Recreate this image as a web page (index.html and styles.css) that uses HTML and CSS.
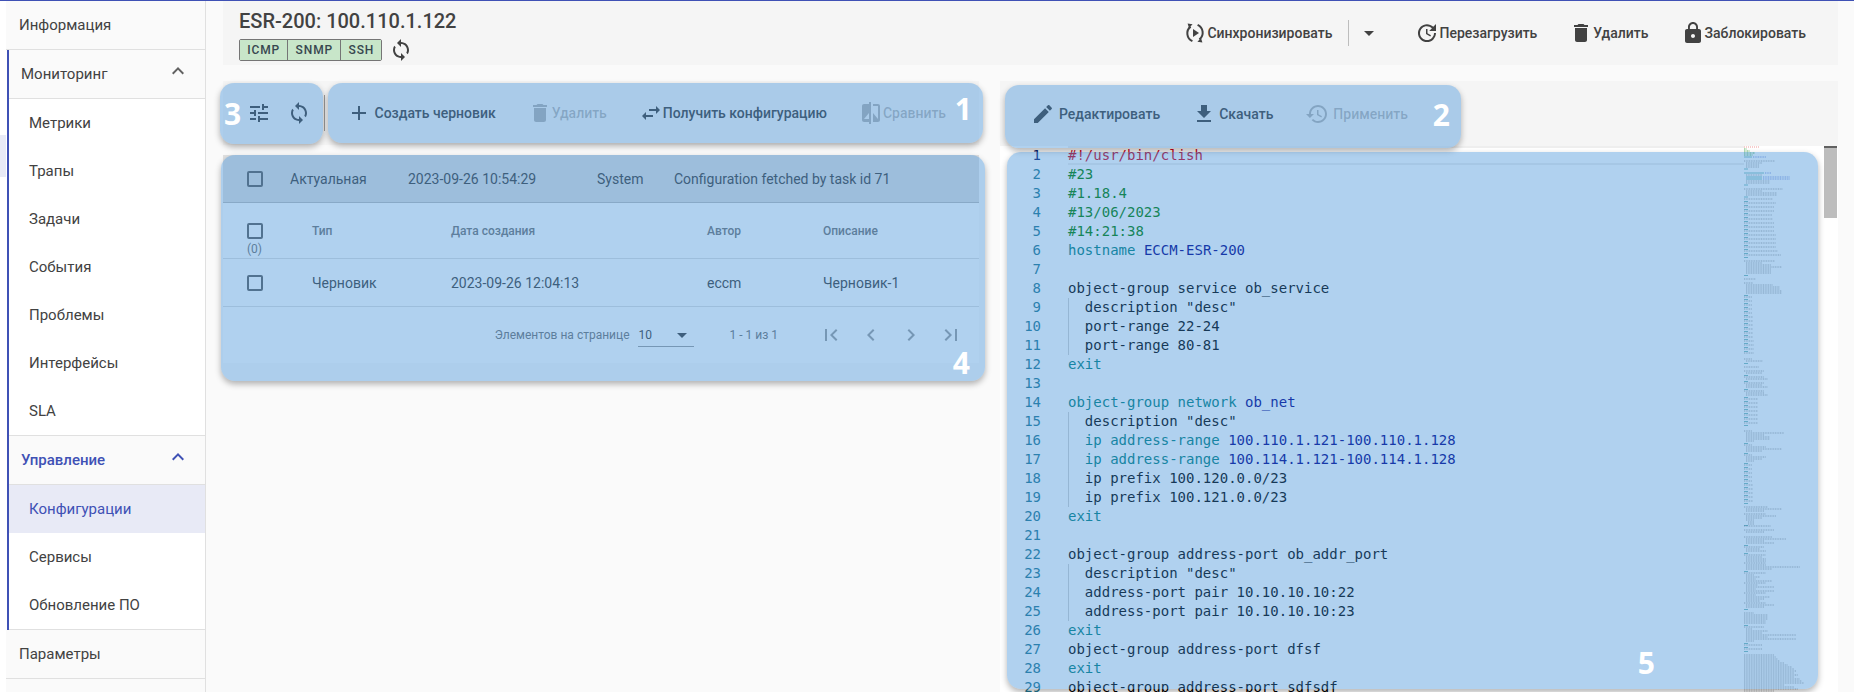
FILE: index.html
```html
<!DOCTYPE html>
<html>

<head>
  <meta charset="utf-8">
  <title>ESR-200</title>
  <link rel="stylesheet" href="styles.css">
</head>

<body>
  <div class="page">
    <!-- Side menu -->
    <div class="strip"><div class="strip-mark"></div></div>
    <div class="nav">
      <div class="nav-head nav-top">Информация</div>
      <div class="nav-group">
        <div class="nav-head">Мониторинг
          <svg class="chev" viewBox="0 0 24 24"><path d="M12 8l-6 6 1.41 1.41L12 10.83l4.59 4.58L18 14z"/></svg>
        </div>
        <div class="nav-item">Метрики</div>
        <div class="nav-item">Трапы</div>
        <div class="nav-item">Задачи</div>
        <div class="nav-item">События</div>
        <div class="nav-item">Проблемы</div>
        <div class="nav-item">Интерфейсы</div>
        <div class="nav-item">SLA</div>
      </div>
      <div class="nav-group">
        <div class="nav-head nav-head-active">Управление
          <svg class="chev" viewBox="0 0 24 24"><path d="M12 8l-6 6 1.41 1.41L12 10.83l4.59 4.58L18 14z"/></svg>
        </div>
        <div class="nav-item nav-item-active">Конфигурации</div>
        <div class="nav-item">Сервисы</div>
        <div class="nav-item">Обновление ПО</div>
      </div>
      <div class="nav-head nav-top">Параметры</div>
      <div class="nav-head nav-top"></div>
    </div>

    <div class="main">
      <!-- Device header -->
      <div class="device">
        <div class="device-info">
          <div class="device-title">ESR-200: 100.110.1.122</div>
          <div class="device-status">
            <div class="badges">
              <span class="badge">ICMP</span><span class="badge">SNMP</span><span class="badge">SSH</span>
            </div>
            <svg class="icon status-sync" viewBox="0 0 24 24"><path d="M12 4V1L8 5l4 4V6c3.31 0 6 2.69 6 6 0 1.01-.25 1.97-.7 2.8l1.46 1.46C19.54 15.03 20 13.57 20 12c0-4.42-3.58-8-8-8zm0 14c-3.31 0-6-2.69-6-6 0-1.01.25-1.97.7-2.8L5.24 7.74C4.46 8.97 4 10.43 4 12c0 4.42 3.58 8 8 8v3l4-4-4-4v3z"/></svg>
          </div>
        </div>
        <div class="device-actions">
          <div class="btn btn-split">
            <svg class="icon" viewBox="0 0 24 24">
              <path d="M10 8v8l6-4z"/>
              <path class="arc" d="M7.6 5.6A8.6 8.6 0 0 0 9.4 20.2"/>
              <path class="arc" d="M16.4 18.4A8.6 8.6 0 0 0 14.6 3.8"/>
              <path d="M4.6 2.6l5 .6-3.6 3.9zM19.4 21.4l-5-.6 3.6-3.9z"/>
            </svg>Синхронизировать
          </div>
          <div class="btn-arrow">
            <svg class="icon" viewBox="0 0 24 24"><path d="M7 10l5 5 5-5z"/></svg>
          </div>
          <div class="btn">
            <svg class="icon" viewBox="0 0 24 24"><path d="M21 10.12h-6.78l2.74-2.82c-2.73-2.7-7.15-2.8-9.88-.1-2.73 2.71-2.73 7.08 0 9.79s7.15 2.71 9.88 0C18.32 15.65 19 14.08 19 12.1h2c0 1.98-.88 4.55-2.64 6.29-3.51 3.48-9.21 3.48-12.72 0-3.5-3.47-3.53-9.11-.02-12.58s9.14-3.47 12.65 0L21 3v7.12zM12.5 8v4.25l3.5 2.08-.72 1.21L11 13V8h1.5z"/></svg>Перезагрузить
          </div>
          <div class="btn">
            <svg class="icon" viewBox="0 0 24 24"><path d="M6 19c0 1.1.9 2 2 2h8c1.1 0 2-.9 2-2V7H6v12zM19 4h-3.5l-1-1h-5l-1 1H5v2h14V4z"/></svg>Удалить
          </div>
          <div class="btn">
            <svg class="icon" viewBox="0 0 24 24"><path d="M18 8h-1V6c0-2.76-2.24-5-5-5S7 3.24 7 6v2H6c-1.1 0-2 .9-2 2v10c0 1.1.9 2 2 2h12c1.1 0 2-.9 2-2V10c0-1.1-.9-2-2-2zm-6 9c-1.1 0-2-.9-2-2s.9-2 2-2 2 .9 2 2-.9 2-2 2zm3.1-9H8.9V6c0-1.71 1.39-3.1 3.1-3.1 1.71 0 3.1 1.39 3.1 3.1v2z"/></svg>Заблокировать
          </div>
        </div>
      </div>

      <div class="panes">
        <!-- Left pane: list of configurations -->
        <div class="pane-left">
          <div class="toolbar">
            <div class="btn-round"><svg class="icon" viewBox="0 0 24 24"><path d="M3 17v2h6v-2H3zM3 5v2h10V5H3zm10 16v-2h8v-2h-8v-2h-2v6h2zM7 9v2H3v2h4v2h2V9H7zm14 4v-2H11v2h10zm-6-4h2V7h4V5h-4V3h-2v6z"/></svg></div>
            <div class="btn-round"><svg class="icon" viewBox="0 0 24 24"><path d="M12 4V1L8 5l4 4V6c3.31 0 6 2.69 6 6 0 1.01-.25 1.97-.7 2.8l1.46 1.46C19.54 15.03 20 13.57 20 12c0-4.42-3.58-8-8-8zm0 14c-3.31 0-6-2.69-6-6 0-1.01.25-1.97.7-2.8L5.24 7.74C4.46 8.97 4 10.43 4 12c0 4.42 3.58 8 8 8v3l4-4-4-4v3z"/></svg></div>
            <div class="toolbar-sep"></div>
            <div class="btn btn-first"><svg class="icon" viewBox="0 0 24 24"><path d="M19 13h-6v6h-2v-6H5v-2h6V5h2v6h6v2z"/></svg><span class="gap4">Создать черновик</span></div>
            <div class="btn btn-off"><svg class="icon" viewBox="0 0 24 24"><path d="M6 19c0 1.1.9 2 2 2h8c1.1 0 2-.9 2-2V7H6v12zM19 4h-3.5l-1-1h-5l-1 1H5v2h14V4z"/></svg>Удалить</div>
            <div class="btn"><svg class="icon" viewBox="0 0 24 24"><path d="M6.99 11L3 15l3.99 4v-3H14v-2H6.99v-3zM21 9l-3.99-4v3H10v2h7.01v3L21 9z"/></svg>Получить конфигурацию</div>
            <div class="btn btn-off"><svg class="icon" viewBox="0 0 24 24"><path d="M10 3H5c-1.1 0-2 .9-2 2v14c0 1.1.9 2 2 2h5v2h2V1h-2v2zm0 15H5l5-6v6zm9-15h-5v2h5v13l-5-6v9h5c1.1 0 2-.9 2-2V5c0-1.1-.9-2-2-2z"/></svg>Сравнить</div>
          </div>

          <div class="config-table">
            <div class="current-row">
              <span class="check"></span>
              <span class="cur-type">Актуальная</span>
              <span class="cur-date">2023-09-26 10:54:29</span>
              <span class="cur-author">System</span>
              <span>Configuration fetched by task id 71</span>
            </div>
            <div class="table-row table-head">
              <div class="check-cell"><span class="check"></span><span class="check-count">(0)</span></div>
              <span>Тип</span>
              <span>Дата создания</span>
              <span>Автор</span>
              <span>Описание</span>
            </div>
            <div class="table-row">
              <div class="check-cell"><span class="check"></span></div>
              <span>Черновик</span>
              <span>2023-09-26 12:04:13</span>
              <span>eccm</span>
              <span>Черновик-1</span>
            </div>
            <div class="paginator">
              <span>Элементов на странице</span>
              <div class="page-size"><span>10</span><svg class="icon" viewBox="0 0 24 24"><path d="M7 10l5 5 5-5z"/></svg></div>
              <span class="page-range">1 - 1 из 1</span>
              <div class="btn-round"><svg class="icon" viewBox="0 0 24 24"><path d="M18.41 16.59L13.82 12l4.59-4.59L17 6l-6 6 6 6zM6 6h2v12H6z"/></svg></div>
              <div class="btn-round"><svg class="icon" viewBox="0 0 24 24"><path d="M15.41 7.41L14 6l-6 6 6 6 1.41-1.41L10.83 12z"/></svg></div>
              <div class="btn-round"><svg class="icon" viewBox="0 0 24 24"><path d="M10 6L8.59 7.41 13.17 12l-4.58 4.59L10 18l6-6z"/></svg></div>
              <div class="btn-round"><svg class="icon" viewBox="0 0 24 24"><path d="M5.59 7.41L10.18 12l-4.59 4.59L7 18l6-6-6-6zM16 6h2v12h-2z"/></svg></div>
            </div>
          </div>
        </div>

        <!-- Right pane: editor -->
        <div class="pane-right">
          <div class="toolbar toolbar-right">
            <div class="btn"><svg class="icon" viewBox="0 0 24 24"><path d="M3 17.25V21h3.75L17.81 9.94l-3.75-3.75L3 17.25zM20.71 7.04c.39-.39.39-1.02 0-1.41l-2.34-2.34c-.39-.39-1.02-.39-1.41 0l-1.83 1.83 3.75 3.75 1.83-1.83z"/></svg><span class="gap4">Редактировать</span></div>
            <div class="btn"><svg class="icon" viewBox="0 0 24 24"><path d="M19 9h-4V3H9v6H5l7 7 7-7zM5 18v2h14v-2H5z"/></svg><span class="gap3">Скачать</span></div>
            <div class="btn btn-off"><svg class="icon" viewBox="0 0 24 24"><path d="M13 3c-4.97 0-9 4.03-9 9H1l3.89 3.89.07.14L9 12H6c0-3.87 3.13-7 7-7s7 3.13 7 7-3.13 7-7 7c-1.93 0-3.68-.79-4.94-2.06l-1.42 1.42C8.27 19.99 10.51 21 13 21c4.97 0 9-4.03 9-9s-4.03-9-9-9zm-1 5v5l4.28 2.54.72-1.21-3.5-2.08V8H12z"/></svg><span class="gap4">Применить</span></div>
          </div>

          <div class="editor">
            <div class="lines">
              <div class="line"><span class="ln ln-cur">1</span><span class="code code-cur sh">#!/usr/bin/clish</span></div>
              <div class="line"><span class="ln">2</span><span class="code cm">#23</span></div>
              <div class="line"><span class="ln">3</span><span class="code cm">#1.18.4</span></div>
              <div class="line"><span class="ln">4</span><span class="code cm">#13/06/2023</span></div>
              <div class="line"><span class="ln">5</span><span class="code cm">#14:21:38</span></div>
              <div class="line"><span class="ln">6</span><span class="code"><span class="kw">hostname</span> <span class="val">ECCM-ESR-200</span></span></div>
              <div class="line"><span class="ln">7</span><span class="code"></span></div>
              <div class="line"><span class="ln">8</span><span class="code">object-group service ob_service</span></div>
              <div class="line"><span class="ln">9</span><span class="code guide">  description "desc"</span></div>
              <div class="line"><span class="ln">10</span><span class="code guide">  port-range 22-24</span></div>
              <div class="line"><span class="ln">11</span><span class="code guide">  port-range 80-81</span></div>
              <div class="line"><span class="ln">12</span><span class="code kw">exit</span></div>
              <div class="line"><span class="ln">13</span><span class="code"></span></div>
              <div class="line"><span class="ln">14</span><span class="code"><span class="kw">object-group network</span> <span class="val">ob_net</span></span></div>
              <div class="line"><span class="ln">15</span><span class="code guide">  description "desc"</span></div>
              <div class="line"><span class="ln">16</span><span class="code guide">  <span class="kw">ip address-range</span> <span class="val">100.110.1.121-100.110.1.128</span></span></div>
              <div class="line"><span class="ln">17</span><span class="code guide">  <span class="kw">ip address-range</span> <span class="val">100.114.1.121-100.114.1.128</span></span></div>
              <div class="line"><span class="ln">18</span><span class="code guide">  ip prefix 100.120.0.0/23</span></div>
              <div class="line"><span class="ln">19</span><span class="code guide">  ip prefix 100.121.0.0/23</span></div>
              <div class="line"><span class="ln">20</span><span class="code kw">exit</span></div>
              <div class="line"><span class="ln">21</span><span class="code"></span></div>
              <div class="line"><span class="ln">22</span><span class="code">object-group address-port ob_addr_port</span></div>
              <div class="line"><span class="ln">23</span><span class="code guide">  description "desc"</span></div>
              <div class="line"><span class="ln">24</span><span class="code guide">  address-port pair 10.10.10.10:22</span></div>
              <div class="line"><span class="ln">25</span><span class="code guide">  address-port pair 10.10.10.10:23</span></div>
              <div class="line"><span class="ln">26</span><span class="code kw">exit</span></div>
              <div class="line"><span class="ln">27</span><span class="code">object-group address-port dfsf</span></div>
              <div class="line"><span class="ln">28</span><span class="code kw">exit</span></div>
              <div class="line"><span class="ln">29</span><span class="code">object-group address-port sdfsdf</span></div>
            </div>

            <svg class="minimap" viewBox="0 0 80 546" width="80" height="546">
              <g class="mm-sh"><path d="M0 1h16"/></g>
              <g class="mm-cm"><path d="M0 3h3M0 5h6M0 7h11M0 9h9"/></g>
              <g class="mm-kw">
                <path d="M0 11h8M0 23h4M0 27h20M2 31h16M2 33h16M0 39h4M0 51h4"/>
                <path class="mm-exits" d="M2 55V113M2 129v1M2 149V209M2 217v1M2 229v1M2 235v1M2 243v1M2 251V283M2 297v1M2 307v1M2 317V359M2 379v1M2 399v1M2 407v1M2 425v1M2 463v1M2 479v1M2 497v1M2 501v1M2 505v1"/>
              </g>
              <g class="mm-val"><path d="M9 11h13M21 27h6M19 31h27M19 33h27"/></g>
              <path class="mm-txt" d="M0 15h31M2 17h16M2 19h13M2 21h13M2 29h16M2 35h24M2 37h24M0 43h39M2 45h16M2 47h31M2 49h31M0 53h29M0 57h32M0 61h30M0 65h30M0 69h28M0 73h29M0 77h30M0 81h30M0 85h30M0 89h32M0 93h32M0 97h32M0 101h32M0 105h34M0 109h37M0 115h31M2 117h16M2 119h25M2 121h36M2 123h25M2 125h25M2 127h25M0 133h12M0 137h9M2 139h27M2 141h34M2 143h34M2 145h36M2 147h36M0 151h8M0 155h8M0 159h8M0 163h8M0 167h8M0 171h9M0 175h9M0 179h9M0 183h9M0 187h9M0 191h9M0 195h10M0 199h10M0 203h10M0 207h10M0 213h8M2 215h17M0 221h15M0 225h20M2 227h16M0 231h20M2 233h22M0 237h20M2 239h16M2 241h22M0 245h20M2 247h18M2 249h22M0 253h14M0 257h14M0 261h14M0 265h14M0 269h14M0 273h14M0 277h14M0 285h8M2 287h38M2 289h18M2 291h24M2 293h24M2 295h8M0 299h8M2 301h20M2 303h36M2 305h16M0 309h8M2 311h20M2 313h16M2 315h8M0 319h8M0 323h8M0 327h8M0 331h8M0 335h8M0 339h9M0 343h9M0 347h9M0 351h9M0 355h9M0 361h24M2 363h36M2 365h18M0 368h22M2 370h30M2 372h16M2 374h8M4 376h6M4 378h6M0 380h27M0 384h30M2 386h18M0 391h28M2 393h40M2 395h18M2 397h28M0 401h20M2 403h14M2 405h20M0 409h22M2 411h16M2 413h20M2 415h20M0 417h22M2 419h20M2 421h54M2 423h26M0 427h22M2 429h8M2 431h14M2 433h10M2 435h26M0 437h22M2 439h12M2 441h28M2 443h10M2 445h28M0 447h22M2 449h10M2 451h24M2 453h18M2 455h14M0 457h22M2 459h28M2 461h18M0 467h10M0 469h24M0 471h24M0 473h24M0 475h22M0 477h22M0 481h20M2 483h6M2 485h22M2 487h16M2 489h50M2 491h22M2 493h50M2 495h8M0 499h18M0 503h18M0 509h30M0 511h32M0 513h34M0 515h36M0 517h40M0 519h44M0 521h48M0 523h50M0 525h52M0 527h50M0 529h54M0 531h50M0 533h56M0 535h58M0 537h60M0 539h40M0 541h50M0 543h54M0 545h30"/>
            </svg>

            <div class="scrollbar"><div class="scroll-thumb"></div></div>
          </div>
        </div>
      </div>
    </div>

    <!-- Numbered blue marks laid over the screenshot -->
    <div class="mark mark-3"><span class="mark-num">3</span></div>
    <div class="mark mark-1"><span class="mark-num">1</span></div>
    <div class="mark mark-2"><span class="mark-num">2</span></div>
    <div class="mark mark-4"><span class="mark-num">4</span></div>
    <div class="mark mark-5"><span class="mark-num">5</span></div>
  </div>
</body>
</html>
```

FILE: styles.css
```css
/* Page frame */
body {
  margin: 0;
  font-family: Roboto, "Liberation Sans", sans-serif;
  font-size: 14px;
  color: #212121;
  background-color: #fafafa;
}

.page {
  position: relative;
  display: flex;
  height: 691px;
  overflow: hidden;
  border-top: 1px solid #3f51b5;
}

/* Side menu */
.strip {
  width: 6px;
  flex: none;
  background-color: #fff;
}

.strip-mark {
  height: 42px;
  margin-top: 134px;
  background-color: #e8eaf6;
}

.nav {
  width: 200px;
  flex: none;
  border-right: 1px solid #e0e0e0;
  box-sizing: border-box;
  background-color: #fff;
  font-size: 15px;
  color: #424242;
}

.nav-head {
  position: relative;
  display: flex;
  align-items: center;
  height: 48px;
  padding-left: 12px;
  border-bottom: 1px solid #e0e0e0;
  background-color: #fafafa;
}

.nav-top {
  padding-left: 13px;
}

.nav-group {
  border-left: 2px solid #3f51b5;
  margin-left: 1px;
}

.nav-head-active {
  color: #3f51b5;
  font-weight: 500;
}

.chev {
  position: absolute;
  right: 15px;
  top: 9px;
  width: 24px;
  height: 24px;
  fill: #616161;
}

.nav-head-active .chev {
  fill: #3f51b5;
}

.nav-item {
  display: flex;
  align-items: center;
  height: 48px;
  padding-left: 20px;
}

.nav-item:last-child {
  border-bottom: 1px solid #e0e0e0;
}

.nav-item-active {
  color: #3f51b5;
  background-color: #e8eaf6;
}

/* Main area */
.main {
  flex: 1;
  min-width: 0;
  padding: 0 16px 0 17px;
}

.icon {
  width: 24px;
  height: 24px;
  flex: none;
  fill: currentColor;
}

.arc {
  fill: none;
  stroke: currentColor;
  stroke-width: 2;
}

.btn {
  display: flex;
  align-items: center;
  padding: 0 16px;
  font-weight: 500;
  color: #424242;
  white-space: nowrap;
}

.btn-off {
  color: rgba(0, 0, 0, 0.26);
}

.btn-round {
  display: flex;
  align-items: center;
  justify-content: center;
  width: 40px;
  height: 40px;
  flex: none;
}

.gap4 {
  margin-left: 4px;
}

.gap3 {
  margin-left: 3px;
}

/* Device header */
.device {
  display: flex;
  justify-content: space-between;
  align-items: center;
  height: 64px;
  background-color: #f5f5f5;
}

.device-info {
  padding-left: 16px;
}

.device-title {
  font-size: 20px;
  font-weight: 500;
  line-height: 26px;
  margin-top: 7px;
  color: #424242;
}

.device-status {
  display: flex;
  align-items: center;
  margin-top: 4px;
  margin-bottom: 4px;
}

.badges {
  display: flex;
  border: 1px solid #757575;
  border-radius: 2px;
}

.badge {
  padding: 0 7.2px;
  height: 20px;
  line-height: 20px;
  font-size: 12px;
  font-weight: 500;
  letter-spacing: 0.9px;
  background-color: #c8e6c9;
  color: #37474f;
  border-left: 1px solid #757575;
}

.badge:first-child {
  border-left: none;
}

.status-sync {
  margin-left: 7px;
  color: #424242;
}

.device-actions {
  display: flex;
  align-items: center;
  height: 26px;
  padding-right: 16px;
}

.btn-split {
  height: 26px;
  border-right: 1px solid #bdbdbd;
}

.btn-arrow {
  display: flex;
  padding: 0 18px 0 8px;
  color: #424242;
}

/* Panes */
.panes {
  display: flex;
  justify-content: space-between;
  margin-top: 16px;
}

.pane-left {
  width: 756px;
  flex: none;
}

.pane-right {
  width: 838px;
  flex: none;
}

.toolbar {
  display: flex;
  align-items: center;
  height: 64px;
  padding-left: 15.5px;
  color: #424242;
  background-color: #f5f5f5;
}

.toolbar-right {
  height: 65px;
  padding-left: 15px;
}

.toolbar-sep {
  width: 1px;
  height: 36px;
  margin: 0 6px 0 5px;
  background-color: #9e9e9e;
}

/* Configurations table */
.config-table {
  margin-top: 10px;
  background-color: #fff;
}

.current-row {
  display: flex;
  align-items: center;
  height: 47px;
  padding-left: 24px;
  background-color: #e0e0e0;
  border-bottom: 1px solid #bdbdbd;
  color: #424242;
}

.cur-type {
  margin-left: 27px;
  width: 118px;
}

.cur-date {
  width: 189px;
}

.cur-author {
  width: 77px;
}

.check {
  display: block;
  width: 12px;
  height: 12px;
  border: 2px solid #616161;
  border-radius: 2px;
  flex: none;
}

.table-row {
  display: grid;
  grid-template-columns: 65px 139px 256px 116px 1fr;
  align-items: center;
  height: 47px;
  padding-left: 24px;
  border-bottom: 1px solid #e0e0e0;
  color: #424242;
}

.table-head {
  height: 55px;
  font-size: 12px;
  font-weight: 500;
  color: #757575;
}

.check-cell {
  position: relative;
}

.check-count {
  position: absolute;
  left: 0;
  top: 19px;
  font-size: 12px;
  font-weight: 400;
  color: #757575;
}

.paginator {
  display: flex;
  align-items: center;
  justify-content: flex-end;
  height: 56px;
  padding-right: 8px;
  font-size: 12px;
  color: #757575;
}

.paginator .btn-round {
  color: #9e9e9e;
}

.page-size {
  display: flex;
  align-items: center;
  justify-content: space-between;
  box-sizing: border-box;
  width: 56px;
  height: 24px;
  margin-left: 8px;
  padding-left: 1px;
  border-bottom: 1px solid #9e9e9e;
  color: #424242;
}

.page-range {
  margin: 0 33px 0 36px;
}

/* Editor */
.editor {
  display: flex;
  height: 546px;
  overflow: hidden;
  background-color: #fff;
  font-family: "DejaVu Sans Mono", monospace;
  font-size: 14px;
  color: #000;
}

.lines {
  width: 744px;
  flex: none;
}

.line {
  display: flex;
  height: 19px;
  line-height: 19px;
  white-space: pre;
}

.ln {
  width: 41px;
  flex: none;
  margin-right: 27px;
  text-align: right;
  color: #237893;
}

.ln-cur {
  color: #0b216f;
}

.code {
  flex: 1;
}

.code-cur {
  box-shadow: inset 0 2px 0 #eee, inset 0 -2px 0 #eee;
}

.guide {
  box-shadow: inset 1px 0 0 #d3d3d3;
}

.sh {
  color: #d00020;
}

.cm {
  color: #008000;
}

.kw {
  color: #008080;
}

.val {
  color: #00008b;
}

/* Minimap drawn as strokes, one line of code = 2px */
.minimap {
  flex: none;
  display: block;
  fill: none;
  stroke-width: 1;
}

.mm-txt {
  stroke: #333;
  stroke-opacity: 0.4;
  stroke-dasharray: 1 0.7;
}

.mm-sh {
  stroke: #ef9a9a;
  stroke-dasharray: 1 1;
}

.mm-cm {
  stroke: #66bb6a;
  stroke-dasharray: 1 0.5;
}

.mm-kw {
  stroke: #008080;
  stroke-opacity: 0.5;
}

.mm-exits {
  stroke-width: 4;
  stroke-dasharray: 1 3;
}

.mm-val {
  stroke: #1a3fc4;
  stroke-opacity: 0.5;
  stroke-dasharray: 1 0.7;
}

.scrollbar {
  width: 14px;
  flex: none;
}

.scroll-thumb {
  width: 13px;
  height: 72px;
  background-color: #bdbdbd;
  border-top: 2px solid #616161;
  box-sizing: border-box;
}

/* Numbered blue marks */
.mark {
  position: absolute;
  display: flex;
  align-items: center;
  background-color: rgba(57, 140, 215, 0.4);
  border-radius: 14px;
  box-shadow: 0 3px 6px rgba(0, 0, 0, 0.3);
}

.mark-num {
  font-family: "Open Sans", sans-serif;
  font-size: 30px;
  font-weight: 700;
  line-height: 40px;
  color: #fff;
}

.mark-3 {
  left: 220px;
  top: 82px;
  width: 103px;
  height: 61px;
  padding-left: 4px;
  box-sizing: border-box;
}

.mark-1 {
  left: 328px;
  top: 82px;
  width: 655px;
  height: 60px;
  justify-content: flex-end;
  align-items: flex-start;
  padding: 6px 11px 0 0;
  box-sizing: border-box;
}

.mark-2 {
  left: 1005px;
  top: 84px;
  width: 456px;
  height: 63px;
  justify-content: flex-end;
  padding: 0 11px 4px 0;
  box-sizing: border-box;
}

.mark-4 {
  left: 221px;
  top: 154px;
  width: 764px;
  height: 226px;
  justify-content: flex-end;
  align-items: flex-end;
  padding-right: 15px;
  box-sizing: border-box;
}

.mark-4 .mark-num {
  margin-bottom: -2px;
}

.mark-5 {
  left: 1007px;
  top: 151px;
  width: 811px;
  height: 537px;
  justify-content: flex-end;
  align-items: flex-end;
  padding: 0 163px 6px 0;
  box-sizing: border-box;
}
```
